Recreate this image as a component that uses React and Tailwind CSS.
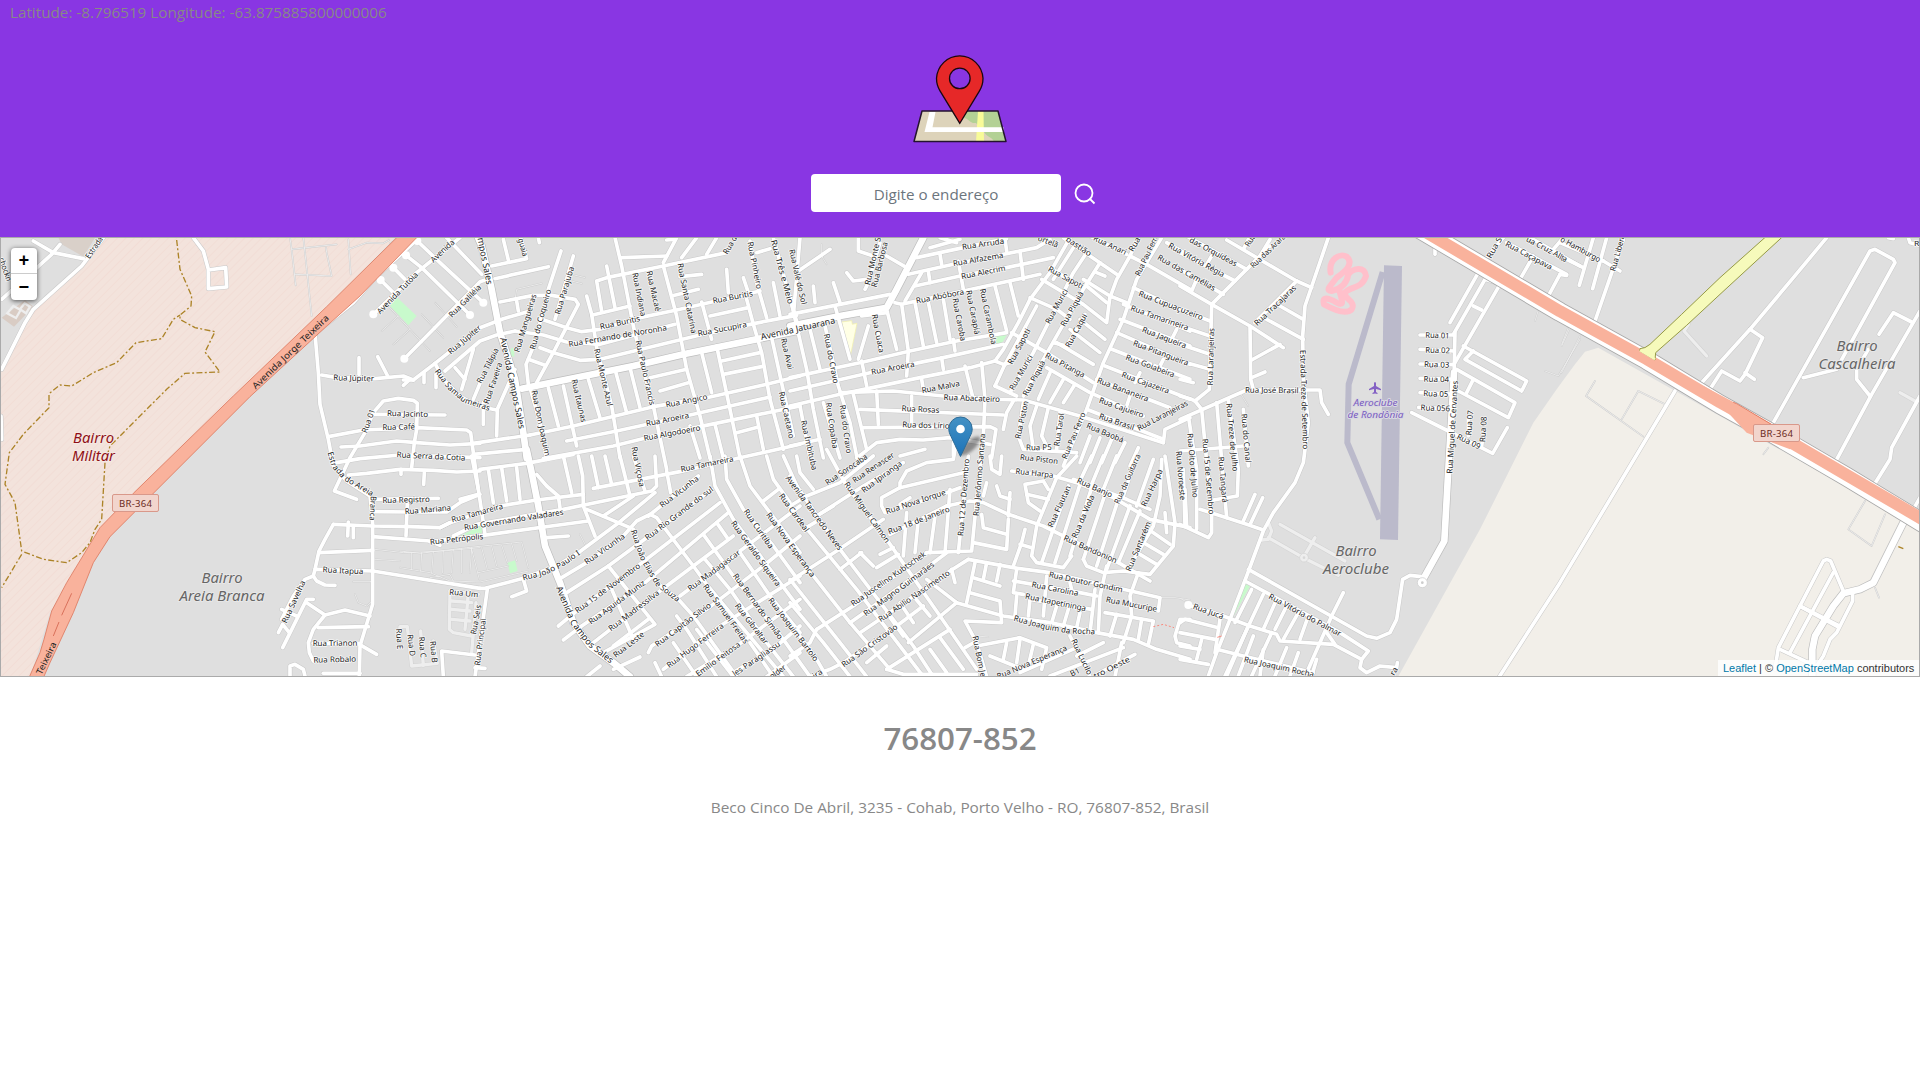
import React from "react";

// Street geometry is grouped by map sheet. Each sheet has its own origin
// (map pixels) and uses third-of-a-pixel units.
const SHEETS = [
  {
    o: [0, 236],
    main: [],
    roads: [
      "1250,12 1130,120 1060,200 945,292 955,410 960,505 985,610 1000,690 1040,735 1110,780 1118,860 1118,1105 1080,1230 1078,1320",
      "965,417 1010,425 1125,428 1210,420 1240,432", "1210,448 1228,432", "1077,365 1077,415", "1133,362 1163,420",
      "1070,790 1003,765 1050,665 1095,590 1120,530 1150,495 1195,487 1240,493 1252,502 1250,580 1243,620 1235,695",
      "1120,535 1335,537", "985,602 1090,582 1250,575 1400,582 1412,590 1420,650 1435,760",
      "1023,633 1080,630 1190,615 1250,620 1350,627 1440,622", "1010,680 1080,668 1200,657 1440,665",
      "1045,717 1100,712 1200,700 1300,703 1370,708 1440,705", "1203,700 1203,715", "1273,710 1271,745",
      "1120,790 1315,787", "1118,827 1230,828 1340,828 1380,800 1440,775", "1222,800 1218,900",
      "1000,865 1118,870 1230,872 1320,875 1350,860", "1045,858 1043,900", "1060,870 1060,905",
      "1000,865 975,910 957,945 945,1000 940,1020 950,1035 975,1047 1005,1048", "957,950 1118,943",
      "1118,902 1290,915 1320,928", "945,1000 1118,1005 1440,1057", "940,1020 915,1030 880,1080 845,1150",
      "845,1120 890,1140", "940,1090 920,1090 848,1235", "848,1165 835,1190", "848,1165 868,1190", "920,1100 975,1137",
      "1110,1140 1035,1122 975,1137 940,1180 925,1220 928,1250 940,1275", "955,1175 1105,1172", "940,1222 1075,1222",
      "1078,1225 1130,1255", "870,1320 870,1290 885,1285 910,1300 915,1320", "970,1312 1080,1312",
      "1120,235 1250,110 1380,5", "1142,132 1180,170", "1180,95 1215,130", "1218,58 1265,95 1410,237",
      "1252,15 1320,80 1450,200", "1213,368 1440,137 1462,130", "1340,5 1445,115",
      "100,15 160,50 250,68", "180,25 155,55 5,190", "310,5 245,90 100,220 75,260 5,400",
      "580,5 610,45 625,100 625,158 680,153 677,95 625,102", "3,540 5,610",
    ],
    thin: [
      "870,5 875,40 887,148", "875,40 1010,25", "910,5 915,50 935,240", "885,115 995,120 980,50 978,35", "1045,10 1052,115",
      "1045,40 1100,20 1150,22 1168,12", "1170,22 1210,5",
      "1145,285 1195,240", "1165,210 1290,345", "1180,325 1230,280", "1265,235 1330,305", "1305,200 1370,272",
      "1125,940 1210,950 1330,945 1440,935", "1125,970 1200,975", "1060,1037 1112,1037", "1065,1075 1075,1100 1100,1110 1112,1100",
    ],
    light: ["1197,1215 1200,1172 1222,1172 1235,1290 1312,1282 1300,1215", "1262,1185 1270,1288"],
    dots: ["1120,235", "1213,368", "1410,237", "1142,132", "1180,95", "1218,58", "1252,15", "1450,200"],
    labels: [
      [1000, 425, 1122, 428, "Rua Júpiter"], [1161, 532, 1284, 535, "Rua Jacinto"], [1147, 574, 1245, 572, "Rua Café"],
      [1093, 590, 1118, 520, "Rua 01"], [1190, 656, 1396, 666, "Rua Serra da Cotia"], [1147, 793, 1289, 790, "Rua Registro"],
      [968, 1001, 1090, 1007, "Rua Itapua"], [852, 1160, 910, 1035, "Rua Savelha"], [938, 1222, 1072, 1221, "Rua Trianon"],
      [940, 1272, 1068, 1269, "Rua Robalo"], [1196, 1178, 1200, 1240, "Rua E"], [1230, 1195, 1238, 1260, "Rua D"],
      [1264, 1202, 1270, 1265, "Rua C"], [1298, 1215, 1304, 1280, "Rua B"], [1135, 230, 1250, 112, "Avenida Tutóia"],
      [1295, 75, 1360, 15, "Avenida"], [262, 65, 303, 5, "Estrada"], [3, 65, 28, 135, "chockn"],
      [762, 455, 983, 242, "Avenida Jorge Teixeira", 27], [117, 1314, 163, 1220, "Teixeira", 27],
    ],
    curves: [["990,648 1003,690 1035,725 1125,778", "Estrada do Areia", 188], ["1120,780 1116,870", "Branca", 74]],
  },
  {
    o: [400, 236],
    main: ["230,-5 245,30 275,160 300,290 345,430 370,590 380,666", "365,458 700,390 850,355 1190,285"],
    roads: [
      "285,128 445,92", "275,90 380,68", "310,10 325,72", "362,5 378,60", "415,5 418,20",
      "10,432 40,432 105,382 240,275 310,248 380,228", "135,405 240,315 290,297 345,285", "165,395 195,430", "220,340 185,460",
      "105,382 130,430 180,480 230,510 290,522", "72,410 72,440", "108,415 108,455", "220,490 245,430", "250,500 250,565",
      "290,600 292,520 345,400", "300,198 400,178 455,178 525,190 535,205 465,340 410,440", "350,195 355,225",
      "483,45 445,160 405,320 378,385 385,445", "520,60 465,250", "425,250 500,275 545,287 600,280 720,245 830,222 1080,165",
      "345,285 430,297 500,318 600,325 825,265", "420,335 460,350 540,373 600,370 730,338 900,297 1065,262 1190,238", "385,370 435,388",
      "560,180 575,235 590,335 635,510 645,570 660,666", "605,225 590,135 620,125 790,90 980,50", "620,90 645,215", "575,238 690,210",
      "645,5 665,90 700,270 730,400 760,510 800,700", "665,65 800,60", "790,90 830,240 860,400 900,540 930,666", "790,80 830,5",
      "845,65 890,5", "920,55 950,5", "800,12 820,10", "840,122 905,115", "815,180 895,160", "980,100 985,170", "1030,125 1045,170",
      "1120,140 1140,240", "905,198 935,310", "930,240 1045,215", "1050,15 1070,140 1100,245", "1040,190 1060,265 1085,350 1110,490 1150,640",
      "1070,50 1110,38", "1120,5 1160,150 1185,240 1200,285", "905,350 935,470", "950,330 990,520 1020,666", "965,375 1080,350",
      "970,415 1085,392", "750,425 860,400", "780,465 865,440", "1115,305 1180,600", "390,597 520,570 760,512 920,485 1100,445 1200,420",
      "500,615 650,585 870,537 1110,483", "430,668 640,630 740,605 900,572 1200,510", "445,455 475,570", "490,450 530,630",
      "565,430 600,545", "645,400 680,530", "690,395 720,515", "220,622 390,597", "220,655 380,640", "945,565 970,666",
      "1070,540 1090,640", "1010,590 1075,573", "870,570 900,666", "390,455 420,560 440,670", "1180,240 1200,5",
    ],
    thin: ["345,190 350,160 425,142", "515,115 555,125", "495,130 545,143"],
    labels: [
      [240, 5, 268, 145, "mpos Sales", 27], [308, 305, 365, 578, "Avenida Campos Sales", 27], [362, 8, 376, 60, "guaia"],
      [150, 240, 240, 150, "Rua Galiléia"], [147, 350, 240, 272, "Rua Júpiter"], [350, 348, 402, 175, "Rua Mangueiras"],
      [397, 340, 446, 160, "Rua do Coqueiro"], [472, 235, 515, 92, "Rua Parajuba"], [237, 440, 290, 338, "Rua Tilápia"],
      [258, 503, 300, 380, "Rua Faveira"], [600, 273, 720, 247, "Rua Buritis"], [506, 325, 800, 275, "Rua Fernando de Noronha"],
      [893, 293, 1040, 265, "Rua Sucupira"], [938, 195, 1058, 172, "Rua Buritis"], [705, 110, 730, 240, "Rua Indiana"],
      [747, 105, 774, 225, "Rua Macaé"], [840, 82, 882, 292, "Rua Santa Catarina"], [1050, 17, 1078, 158, "Rua Pinheiro"],
      [1120, 12, 1172, 203, "Rua Três e Meio", 25], [590, 338, 630, 510, "Rua Monte Azul"], [714, 313, 757, 507, "Rua Paulo Francis"],
      [522, 430, 552, 558, "Rua Itaunas"], [402, 463, 443, 660, "Rua Dom Joaquim"], [797, 507, 922, 482, "Rua Angico"],
      [738, 563, 867, 538, "Rua Aroeira"], [731, 607, 901, 575, "Rua Algodoeiro"], [1150, 307, 1172, 400, "Rua Avai"],
      [1144, 467, 1175, 607, "Rua Caetano"], [975, 52, 1012, -8, "Rua da"], [1083, 304, 1305, 254, "Avenida Jatuarana", 27],
    ],
    curves: [["110,402 150,455 195,493 290,524", "Rua Samaumeiras", 203]],
  },
  {
    o: [400, 456],
    main: ["380,-20 395,50 415,150 435,270 480,380 520,500 570,570 640,620 690,662"],
    roads: [
      "240,40 380,22 520,-5", "215,0 235,100 250,200 255,235", "265,40 280,140", "305,35 320,135", "350,35 360,130", "180,130 235,115",
      "120,215 150,200 300,150 410,132 550,115", "160,240 230,205 490,160 755,105 770,90 765,0", "90,257 250,238 565,195",
      "410,55 440,90 475,120 480,155", "490,0 515,110", "535,0 548,60 550,150 585,240", "575,0 595,95", "615,0 635,85", "660,0 690,120",
      "580,97 840,47 1020,5 1200,-35", "560,160 690,215", "700,0 735,105", "800,45 812,110", "440,245 505,240",
      "240,397 255,397 370,367 470,330 535,290 650,205 765,110", "610,180 700,120", "485,365 560,320 670,240 710,195 750,175 770,185 880,330 920,385 990,470 1150,662",
      "500,410 625,330 740,245 935,100", "745,180 895,60", "262,400 225,662", "370,370 380,405 335,422", "130,662 125,585 225,597",
      "225,635 255,637", "475,510 530,465 720,325 960,140", "490,552 545,510 735,380 985,170", "580,560 780,405 1000,240",
      "840,420 1020,285 1200,150", "625,330 765,505 610,590", "745,490 640,570 ", "635,400 700,550", "560,662 600,630", "640,640 720,603",
      "700,220 730,300 770,380 835,430 880,480 1010,662", "930,0 945,90 1000,190 1140,380 1200,460", "975,0 980,70 1030,160 1120,270 1200,380",
      "1020,0 1050,90 1110,170 1200,290", "1100,0 1120,70 1170,140", "1150,0 1200,110", "1090,135 1135,100", "950,200 985,250",
      "910,235 1000,360 1150,550 1230,662", "915,310 990,400 1100,560 1180,662", "1020,290 1110,420 1200,530",
      "745,590 755,570 920,460 1090,330 1200,240", "790,640 960,510 1200,360", "860,662 1010,570 1200,430", "1000,650 1130,570 1200,510",
      "1100,662 1200,590", "830,480 860,520 950,662", "820,560 890,662", "765,620 785,662", "890,520 1000,662", "1050,560 1120,662",
    ],
    thin: [
      "0,285 60,292 200,275 365,258 385,335", "0,335 90,350 150,375 240,378 385,345", "35,290 35,340", "65,290 62,345", "100,288 95,350",
      "130,285 128,350", "160,280 155,350", "185,278 185,350", "215,275 210,350", "90,365 150,355 160,375", "215,280 238,370", "245,275 262,340",
      "275,270 290,330", "305,268 322,320", "335,263 350,315", "235,350 325,330", "540,235 555,265",
    ],
    light: ["150,405 148,520 160,530 215,540", "205,410 200,470 195,520", "155,435 215,440", "155,460 210,465", "155,490 210,495", "228,440 215,590", "150,405 235,415"],
    labels: [
      [14, 167, 153, 155, "Rua Mariana"], [155, 192, 308, 150, "Rua Tamareira"], [192, 215, 490, 168, "Rua Governando Valadares"],
      [90, 258, 250, 241, "Rua Petrópolis"], [148, 408, 235, 416, "Rua Um"], [220, 535, 236, 447, "Rua Seis"],
      [232, 628, 250, 487, "Rua Principal"], [556, 320, 672, 238, "Rua Vicunha"], [782, 150, 893, 65, "Rua Vicunha"],
      [842, 40, 1000, 8, "Rua Tamareira"], [738, 247, 937, 97, "Rua Rio Grande do sul"], [528, 466, 718, 327, "Rua 15 de Novembro"],
      [568, 500, 733, 378, "Rua Aguida Muniz"], [628, 520, 775, 408, "Rua Madressilva"], [642, 600, 730, 532, "Rua Leste"],
      [768, 567, 930, 445, "Rua Capitão Silvio"], [803, 630, 968, 507, "Rua Hugo Ferreira"], [890, 656, 1018, 563, "Emilio Feitosa"],
      [1000, 655, 1138, 562, "les Paragliassu"], [1105, 668, 1155, 632, "tolder"], [866, 400, 1018, 287, "Rua Madagascar"],
      [914, 387, 1040, 560, "Rua Samuel Freitas"], [1004, 355, 1143, 547, "Rua Bernardo Simião"], [1010, 445, 1100, 562, "Rua Gibraltar"],
      [1110, 428, 1250, 613, "Rua Joaquim Bartolo"], [998, 197, 1136, 388, "Rua Geraldo Siqueira"], [1036, 162, 1115, 275, "Rua Curitiba"],
      [1104, 172, 1240, 360, "Rua Nova Esperança"], [1142, 115, 1222, 225, "Rua Cardeal"], [1162, 62, 1322, 280, "Avenida Tancredo Neves", 25],
      [702, -28, 726, 92, "Rua Viçosa"],
    ],
    curves: [
      ["475,392 520,500 570,565 660,635", "Avenida Campos Sales", 283, 27],
      ["368,366 430,350 480,328 550,280", "Rua João Paulo I", 188],
      ["700,222 730,310 775,385 860,450", "Rua João Elias de Souza", 258],
    ],
  },
  {
    o: [790, 236],
    main: ["0,270 150,240 290,215 320,160 400,5"],
    roads: [
      "0,235 300,175", "0,425 220,378 360,345 500,315 650,290", "0,465 240,410 460,365 640,325", "0,510 150,475 390,425 540,395 615,375",
      "150,470 310,465 460,480 630,490 700,492 870,540 1120,620", "315,200 335,205 520,165 750,115", "380,65 520,35 650,8", "355,115 490,85 740,35 780,10",
      "375,150 510,120 650,95 790,65", "345,195 395,110", "415,105 420,140", "450,55 455,85", "505,75 520,160", "645,10 650,45", "690,45 700,130",
      "335,205 355,345 350,420", "290,220 320,340", "375,200 400,330", "415,200 440,320", "460,190 480,310", "490,310 495,345", "615,150 650,285",
      "660,140 685,240", "840,5 780,110 720,190 685,260 640,340 615,375", "130,140 150,200", "135,210 180,370", "0,180 20,270 50,400 70,520 100,666",
      "70,150 75,200", "60,280 90,400", "105,270 145,450 180,560 200,660", "205,370 235,270", "215,240 290,230", "265,290 270,350", "25,105 120,40", "170,110 190,135 230,130",
      "205,5 205,45 250,60", "225,160 235,140 270,20", "290,60 350,95", "215,375 230,450", "455,365 460,400", "395,430 400,460", "525,390 550,490",
      "575,380 585,490 580,600", "190,475 230,640", "260,465 265,565", "365,480 365,560", "210,520 640,537", "220,575 600,572 618,580 605,666",
      "0,630 90,610", "30,510 60,666", "100,500 150,666", "200,666 260,620 330,610 400,612 480,605 540,615", "330,660 405,640", "490,620 490,660", "540,615 600,625",
      "665,290 770,350 910,440", "615,375 640,385 660,380", "615,450 680,480", "615,450 640,395 740,210", "660,470 730,350 800,210 850,110 890,50",
      "700,480 760,370 840,230 880,160 930,80", "790,320 830,330 885,235", "850,35 790,130", "720,185 800,220 840,250", "755,130 880,205 950,260 960,180",
      "780,95 875,155", "820,5 900,60 980,115", "880,130 960,180 1010,200", "920,110 945,120", "890,150 950,200", "870,250 945,310", "840,280 930,350",
      "800,320 910,385", "1115,5 1070,80 1040,130 1000,250 940,380 890,520 840,640 820,690", "1045,5 1020,60 980,130 960,185",
      "1030,155 1200,235", "1000,205 1200,285", "990,250 1200,330", "980,290 1200,385", "965,340 1200,430", "945,390 1200,490", "920,430 1140,515",
      "770,395 900,470 1060,540", "890,520 1120,610", "1130,20 1200,60", "1070,85 1200,160", "1020,60 1070,85", "900,0 1010,55", "760,5 800,30",
      "640,580 650,530 670,495", "700,500 685,600 700,640 860,650", "740,510 720,570 730,640", "775,515 755,600 775,640", "810,530 800,640",
      "745,490 780,410", "780,500 820,430", "820,500 855,445", "1120,620 1125,580 1200,545", "900,600 870,680", "930,605 900,680", "965,610 935,680", "1005,620 975,680", "1045,635 1020,690",
      "1160,280 1140,320", "1120,370 1105,400", "1050,410 1035,440", "1020,480 1010,510", "420,35 510,10", "450,5 500,20",
    ],
    thin: ["95,25 95,60 110,85"],
    labels: [
      [5, 40, 42, 205, "Rua Valé do Sol"], [232, 147, 268, -10, "Rua Monte Se"], [252, 153, 286, 18, "Rua Barbosa"],
      [516, 33, 642, 15, "Rua Arruda"], [489, 83, 640, 57, "Rua Alfazema"], [514, 122, 646, 96, "Rua Alecrim"],
      [378, 195, 522, 167, "Rua Abóbora"], [495, 187, 520, 315, "Rua Caroba"], [536, 163, 562, 295, "Rua Carapiá"],
      [577, 158, 612, 325, "Rua Carambola"], [253, 235, 275, 350, "Rua Cuaca"], [109, 293, 138, 442, "Rua do Cravo"],
      [244, 408, 373, 384, "Rua Aroeira"], [395, 464, 509, 442, "Rua Malva"], [461, 484, 630, 490, "Rua Abacateiro"],
      [335, 517, 448, 523, "Rua Rosas"], [337, 566, 490, 570, "Rua dos Lírios"], [115, 500, 136, 637, "Rua Copaíba"],
      [157, 507, 177, 652, "Rua do Cravo"], [40, 553, 74, 702, "Rua Imbituba"], [776, 97, 878, 152, "Rua Sapoti"],
      [772, 262, 828, 160, "Rua Murici"], [818, 270, 875, 168, "Rua Piquiá"], [832, 333, 885, 235, "Rua Caqui"],
      [660, 383, 715, 280, "Rua Sapoti"], [664, 460, 722, 358, "Rua Murici"], [705, 478, 760, 375, "Rua Piquiá"],
      [767, 357, 883, 418, "Rua Pitanga"], [683, 608, 708, 495, "Rua Piston"], [800, 630, 815, 532, "Rua Tarol"],
      [823, 668, 880, 530, "Rua Pau Ferro"], [708, 635, 785, 634, "Rua P5"], [890, 568, 1000, 613, "Rua Baobá"],
      [928, 540, 1032, 575, "Rua Brasil"], [928, 492, 1060, 538, "Rua Cajueiro"], [922, 432, 1075, 490, "Rua Bananeira"],
      [996, 415, 1137, 466, "Rua Cajazeira"], [1008, 363, 1153, 417, "Rua Goiabeira"], [1030, 320, 1195, 382, "Rua Pitangueira"],
      [1057, 280, 1188, 330, "Rua Jaqueira"], [1023, 215, 1195, 276, "Rua Tamarineira"], [1047, 172, 1238, 245, "Rua Cupuaçuzeiro"],
      [1043, 578, 1192, 500, "Rua Laranjeiras"], [1042, 118, 1100, -5, "Rua Pau Ferro"], [1022, 45, 1045, 5, "Rua"],
      [912, 5, 1008, 50, "Rua Anari"], [830, 7, 902, 55, "bastião"], [745, 5, 804, 28, "ortelã"], [1104, 62, 1275, 158, "Rua das Camélias"],
      [1137, 27, 1302, 117, "Rua Vitória Régia"],
    ],
  },
  {
    o: [790, 456],
    main: [],
    roads: [
      "580,-60 560,130 545,285 410,290", "535,0 510,240 505,290", "0,60 150,280 370,570 430,662", "110,-20 170,90 290,250 450,480 560,640",
      "0,160 60,230 200,400 400,662", "0,270 70,360 180,500 300,640", "0,370 150,560 230,662", "0,440 100,560 180,662", "0,500 80,610 110,662",
      "20,0 30,50 70,100", "0,375 140,285 280,190", "0,150 50,120 150,80 250,0", "80,180 220,90 340,20", "80,520 190,450 410,290",
      "180,500 230,465 430,320 470,290", "210,530 270,490 480,345 535,310", "0,600 60,560 80,520", "60,662 120,640 160,620 320,510 400,450",
      "355,560 500,440", "290,640 480,520", "150,340 215,290", "260,335 325,295", "270,295 310,275", "210,290 250,330", "80,180 130,150",
      "40,220 90,190", "330,440 370,500", "370,420 420,480", "290,470 340,540", "420,580 470,650", "450,545 520,640", "230,620 290,570",
      "500,440 640,480 780,500 920,530 1030,550 1100,580 1200,610", "500,440 410,370", "485,340 495,380", "535,310 670,335 780,350 1000,400 1110,425 1105,465",
      "555,320 530,440", "590,320 580,370", "630,325 620,375", "550,365 630,390", "540,410 630,435 635,500 525,495 560,560 590,662", "525,575 560,555",
      "550,260 650,280 655,190", "575,175 580,215 650,235", "470,150 540,135 580,140 655,175 760,210 830,245 985,320 1080,375", "660,110 655,180",
      "620,90 630,120 660,130", "590,80 580,120", "600,0 605,40 630,55 635,0", "665,45 790,60 860,80 970,125 1080,190 1200,215", "850,70 1010,130 1080,160",
      "775,100 760,75 705,85 715,140 750,165", "710,115 775,130", "860,0 800,65 740,210 725,300 740,320 820,335 845,300",
      "835,90 755,320", "870,85 795,320", "905,95 840,300", "945,115 880,310", "985,130 920,330", "1020,150 950,340", "1050,165 985,320",
      "905,0 870,75", "940,0 905,85", "980,0 940,100", "1040,0 1000,120", "1090,10 1040,150", "880,310 890,330 940,350 1000,345 1080,355 1150,270 1155,200 1125,0",
      "1115,10 1110,120 1090,210 1020,330", "1075,220 1140,265", "1060,260 1120,295", "1050,295 1100,325", "1125,170 1130,230", "705,220 695,260 670,330", "690,265 725,275",
      "680,340 670,410 700,415", "670,375 870,410 920,420", "720,430 905,460", "770,360 760,480", "840,380 845,400", "680,420 675,480", "720,430 715,480",
      "800,450 785,500", "835,460 820,510", "870,470 860,515", "915,400 900,530", "950,330 930,420 925,530", "945,470 1090,495 1075,565", "980,475 960,540",
      "1045,350 1020,420 1025,480 1000,560", "1055,490 1045,550", "995,560 975,662", "560,570 690,545 770,575 755,640", "600,600 700,640", "650,560 640,610",
      "690,550 680,620", "730,565 715,630", "840,540 870,600 900,662", "690,650 860,575", "860,600 940,560", "780,660 1000,575", "930,650 1035,595",
      "520,50 330,95 330,80 350,45 410,20 490,10 495,-20", "330,95 275,125 275,150 285,170", "290,170 470,110 510,95", "300,235 470,150", "385,190 375,290",
      "350,170 340,300", "435,180 420,290", "480,100 465,290", "360,125 330,145", "1185,100 1190,210", "1200,490 1170,490 1155,540 1160,560 1200,570", "290,640 340,655 560,655",
    ],
    thin: ["1115,425 1155,425 1200,432", "560,540 595,543"],
    labels: [
      [108, 82, 230, 0, "Rua Sorocaba"], [190, 75, 310, -5, "Rua Renascer"], [217, 105, 333, 20, "Rua Ipiranga"],
      [168, 80, 294, 258, "Rua Miguel Calmon"], [288, 167, 466, 108, "Rua Nova Iorque"], [295, 228, 478, 158, "Rua 18 de Janeiro"],
      [512, 240, 530, 8, "Rua 12 de Dezembro"], [558, 180, 578, -67, "Rua Jerônimo Santana"], [185, 445, 405, 292, "Rua Juscelino Kubtschek"],
      [223, 475, 430, 323, "Rua Magno Guimarães"], [268, 492, 477, 348, "Rua Abilio Nascimento"], [157, 628, 320, 510, "Rua São Cristovão"],
      [677, 45, 790, 58, "Rua Harpa"], [690, 3, 804, 16, "Rua Piston"], [862, 72, 966, 118, "Rua Banjo"],
      [780, 213, 836, 90, "Rua Flautan"], [852, 245, 907, 118, "Rua da Viola"], [980, 142, 1045, -5, "Rua da Guitarra"],
      [1060, 150, 1112, 40, "Rua Harpa"], [1014, 345, 1076, 198, "Rua Santarém"], [822, 245, 980, 315, "Rua Bandonion"],
      [777, 355, 998, 402, "Rua Doutor Gondim"], [725, 385, 865, 412, "Rua Carolina"], [706, 420, 888, 458, "Rua Itapetininga"],
      [948, 430, 1101, 460, "Rua Mucuripe"], [850, 550, 900, 655, "Rua Lucilo"], [555, 540, 580, 662, "Rua Bom Je"],
      [622, 662, 830, 575, "Rua Nova Esperança"], [912, 662, 1018, 608, "tro Oeste"], [842, 655, 868, 642, "B1"],
      [1166, -15, 1178, 132, "Rua Noroeste"], [70, 662, 95, 645, "ira"],
    ],
    curves: [["672,486 770,513 840,525 940,528", "Rua Joaquim da Rocha", 248]],
  },
  {
    o: [1180, 236],
    main: ["822,410 805,700 793,915 732,1025"],
    roads: [
      "445,5 375,210 368,300 370,430 385,560 370,680 345,740 280,830 250,885 200,1020 150,1150 110,1250 85,1320",
      "0,150 95,205 210,270 310,335", "300,325 215,372", "210,270 212,430 220,460", "215,425 255,408", "95,205 130,170 270,30", "95,205 88,460 45,495 65,520",
      "0,550 200,462 420,462 425,500 445,535", "0,480 30,488 45,495", "0,430 40,440", "0,220 90,255", "0,270 90,300", "0,325 90,355", "0,375 90,400",
      "20,0 200,100", "0,50 165,135", "0,100 130,175", "140,12 350,135 395,155", "270,10 240,60", "205,10 190,40", "95,60 80,85", "50,130 35,165",
      "350,135 225,260", "300,210 370,250", "260,250 370,310", "25,540 50,700 50,880", "65,520 95,830 95,890 85,905 0,865", "110,500 140,845",
      "145,490 175,700 172,780 100,792", "190,520 205,690", "0,645 190,630", "10,700 15,870", "60,820 140,845 200,865 250,882", "225,775 190,855",
      "248,785 212,862", "205,1000 560,1200 590,1207 630,1190 650,1150 668,1030 690,1018 725,1022", "195,1035 480,1190 565,1245 545,1270 540,1295 560,1310 600,1290 650,1295 652,1280",
      "490,1070 455,1140 380,1310", "825,290 822,430", "820,295 915,130 950,140", "825,380 960,145", "895,110 810,260", "880,210 905,222", "720,297 822,297", "720,340 822,345",
      "720,384 822,386", "720,427 822,430", "720,470 810,474", "716,514 800,518", "695,530 805,585 938,652 982,575", "850,330 1040,435 1025,465 855,370 880,345",
      "830,400 1005,500 985,545 835,465", "880,430 860,470", "865,540 865,600", "910,590 905,630", "920,65 970,5", "1020,130 1060,60", "980,20 1160,115", "1140,115 1105,180", "1050,5 1200,90",
      "1120,40 1150,5", "765,5 765,55", "25,1107 130,1140 210,1170 290,1195 300,1215 460,1225 545,1270", "215,1060 165,1160", "250,1075 135,1320", "290,1090 250,1180", "205,1170 140,1320",
      "320,1110 285,1180", "355,1130 310,1210", "385,1140 360,1210", "220,1200 175,1320", "275,1190 215,1320", "320,1235 285,1320", "355,1250 330,1320", "410,1270 395,1320", "250,1240 240,1320",
      "110,1240 190,1260 400,1310", "0,1160 15,1150 115,1175", "0,1190 105,1210", "0,1230 60,1240", "0,1270 85,1285", "65,1210 50,1270", "120,1150 105,1250", "440,1190 465,1225",
    ],
    thin: ["1165,275 1145,325", "1200,310 1135,420 1095,405", "180,470 205,510", "1085,190 1065,255", "5,1090 25,1100"],
    light: ["300,865 495,975", "265,905 370,965 475,1018", "370,965 405,905", "265,860 275,885 265,910 245,912"],
    dots: ["25,1107", "727,1040"],
    labels: [
      [215, 92, 320, -8, "Rua das Araras"], [30, 10, 170, 85, "das Orquídeas"], [200, 30, 222, -5, "Rua"],
      [226, 265, 345, 152, "Rua Tracajaras"], [90, 448, 95, 276, "Rua Laranjeiras"], [195, 462, 356, 464, "Rua José Brasil"],
      [368, 342, 377, 640, "Estrada Treze de Setembro"], [147, 502, 166, 706, "Rua Treze de Julho"], [192, 533, 205, 680, "Rua do Canal"],
      [30, 592, 46, 785, "Rua Oito de Julho"], [75, 608, 95, 835, "Rua 15 de Setembro"], [123, 662, 135, 800, "Rua Tangará"],
      [736, 297, 808, 300, "Rua 01"], [736, 342, 810, 344, "Rua 02"], [732, 385, 808, 387, "Rua 03"], [731, 429, 807, 431, "Rua 04"],
      [730, 472, 805, 475, "Rua 05"], [722, 515, 810, 518, "Rua 056"], [866, 598, 872, 523, "Rua 07"], [908, 618, 912, 542, "Rua 08"],
      [832, 600, 900, 633, "Rua 09"], [809, 713, 826, 434, "Rua Miguel de Cervantes"], [268, 1080, 482, 1195, "Rua Vitória do Palmar"],
      [40, 1110, 130, 1142, "Rua Jucá"], [192, 1270, 402, 1316, "Rua Joaquim Rocha"], [978, 22, 1115, 95, "Rua Caçapava"],
      [1040, 8, 1160, 70, "ua Cruz Alta"], [926, 65, 960, 5, "Rua S"], [635, 1316, 648, 1295, "ra"],
    ],
  },
  {
    o: [1560, 236],
    main: ["1030,860 940,1040 900,1060 850,1072 820,1110 765,1200 757,1240 757,1320"],
    roads: [
      "800,5 700,125 570,280 425,440", "570,280 608,305 555,415 540,435 485,405 450,460", "555,410 583,430",
      "640,560 930,45 945,40 1000,70 1005,80 840,380 830,400 730,425", "1080,225 935,475 825,680", "1055,258 1000,230 957,295", "925,340 890,400 890,430 930,480",
      "1080,480 995,635 990,670 940,750", "1080,785 1060,820", "105,255 190,10", "0,60 70,95", "58,148 100,5", "98,158 140,5", "130,75 180,105",
      "0,20 130,75", "0,115 20,118", "345,465 0,1040 -200,1350", "645,1300 655,1235 790,975 800,970 812,975 850,1065", "820,1010 690,1250",
      "878,1075 878,1095 830,1190 810,1210 790,1260 770,1290", "720,1110 835,1168", "722,1112 833,1172", "660,1240 745,1280", "985,5 1000,8", "1045,5 1050,20 1080,28",
    ],
    thin: [
      "105,435 78,480 250,602", "235,465 185,550", "235,465 315,505", "915,795 865,880 935,930 975,835", "945,1055 957,1085", "625,635 610,655",
      "30,275 5,330", "60,300 5,410",
    ],
    light: ["1020,470 1065,495", "385,265 372,285 440,360"],
    labels: [[3, 8, 120, 72, "o Hamburgo"], [0, 62, 20, 72, "lta"], [158, 105, 188, -5, "Rua Libero"], [1062, 22, 1078, 22, "R"]],
  },
];

const at = (o) => `translate(${o[0]} ${o[1]}) scale(0.33333)`;

function Lines({ list, width, color }) {
  return (
    <g fill="none" stroke={color} strokeWidth={width} strokeLinecap="round" strokeLinejoin="round">
      {(list || []).map((p, i) => <polyline key={i} points={p} />)}
    </g>
  );
}

function StreetName({ item }) {
  const [x1, y1, x2, y2, text, size = 24] = item;
  const length = Math.hypot(x2 - x1, y2 - y1);
  const angle = (Math.atan2(y2 - y1, x2 - x1) * 180) / Math.PI;
  return (
    <text transform={`translate(${x1} ${y1}) rotate(${angle})`} dy="8" fontSize={size} textLength={length} lengthAdjust="spacingAndGlyphs">
      {text}
    </text>
  );
}

function CurvedName({ item, id }) {
  const [points, text, length, size = 24] = item;
  return (
    <>
      <path id={id} d={"M" + points.split(" ").join(" L")} fill="none" stroke="none" />
      <text fontSize={size} dy="8">
        <textPath href={"#" + id} textLength={length} lengthAdjust="spacingAndGlyphs">{text}</textPath>
      </text>
    </>
  );
}

function Shield({ x, y }) {
  return (
    <g>
      <rect x={x} y={y} width="46" height="17" rx="1.5" fill="#f2d5cd" stroke="#d9988a" strokeWidth="1" />
      <text x={x + 23} y={y + 12} textAnchor="middle" fontSize="9.6" fill="#6b2a1c" textLength="33">BR-364</text>
    </g>
  );
}

function District({ x, y, lines, color = "#666666", size = 15.2, gap = 18, halo = "#e8e8e8" }) {
  return (
    <g fontSize={size} fontStyle="italic" fill={color} stroke={halo} strokeWidth="2" paintOrder="stroke" strokeLinejoin="round" textAnchor="middle">
      {lines.map(([t, w], i) => <text key={t} x={x} y={y + i * gap} textLength={w} lengthAdjust="spacingAndGlyphs">{t}</text>)}
    </g>
  );
}

function StreetMap() {
  const [west, north] = SHEETS;
  const aero = SHEETS[5].o;
  const east = SHEETS[6].o;
  return (
    <svg viewBox="1 238 1918 438" className="block h-full w-full" fontFamily="'Noto Sans', 'Open Sans', sans-serif" role="img" aria-label="Mapa de Porto Velho">
      <defs>
        <pattern id="hatch" width="6" height="6" patternUnits="userSpaceOnUse" patternTransform="scale(3) rotate(45)">
          <line x1="0" y1="0" x2="0" y2="6" stroke="#f1d6ce" strokeWidth="0.8" />
        </pattern>
        <linearGradient id="pin" x1="0" y1="0" x2="0" y2="1">
          <stop offset="0" stopColor="#4391c4" />
          <stop offset="1" stopColor="#1d73b8" />
        </linearGradient>
        <filter id="soft" x="-30%" y="-30%" width="160%" height="160%"><feGaussianBlur stdDeviation="1.6" /></filter>
      </defs>
      <rect x="0" y="236" width="1920" height="442" fill="#dfdfdf" />

      <g transform={at(west.o)}>
        {["#f3e3dc", "url(#hatch)"].map((f) => (
          <polygon key={f} fill={f} points="310,0 245,90 100,222 75,260 0,405 0,1326 90,1326 150,1130 290,890 400,775 980,215 1190,0" />
        ))}
        <polygon points="175,5 285,5 250,62 185,25" fill="#d9d0c9" />
        <polygon points="5,245 42,272 100,212 75,192" fill="#d9ccc4" />
        <g fill="none" stroke="#eee" strokeWidth="7"><path d="M22 232l18-22 22 12-14 24zM60 220l14-18 16 10-12 20z" /></g>
        <polygon points="1190,183 1250,240 1225,268 1170,210" fill="#c8facc" />
        <polygon points="1380,900 1445,868 1445,897" fill="#c8facc" />
      </g>
      <g transform={at(north.o)}><polygon points="333,335 343,338 343,362 331,360" fill="#c8facc" /></g>
      <g transform={at([400, 456])} fill="#c8facc">
        <polygon points="322,320 345,313 353,345 330,352" />
        <polygon points="180,240 245,208 245,237" />
      </g>
      <g transform={at([790, 236])}>
        <polygon points="155,258 185,254 187,265 201,262 179,370" fill="#ffffe5" stroke="#f5f3a8" strokeWidth="2" />
        <polygon points="616,293 656,287 636,322 620,323" fill="#c8facc" />
      </g>
      <g transform={at(aero)}>
        <polygon points="612,88 666,90 654,912 600,910" fill="#bbbacb" />
        <polyline points="608,108 506,445 502,620 598,850" fill="none" stroke="#bbbacb" strokeWidth="18" />
        <polygon points="195,1043 210,1050 150,1160" fill="#c8facc" />
        <path d="M452 110C445 70 480 50 500 62C525 85 490 110 470 125C450 150 435 165 455 165C480 160 500 145 505 115C520 95 555 90 558 120C545 160 510 150 495 170C490 190 530 195 515 220C495 240 450 215 432 205C425 180 445 185 470 200C500 215 480 180 478 160" fill="none" stroke="#ffc0cb" strokeWidth="18" strokeLinecap="round" />
      </g>
      <g transform={at(east)}>
        <polygon points="115,335 75,347 45,385 -10,460 -80,560 -240,880 -490,1330 1085,1330 1085,880" fill="#f2efe9" />
      </g>

      {SHEETS.map((s, i) => (
        <g key={i} transform={at(s.o)}>
          <Lines list={s.thin} width={5} color="#cbcbcb" />
          <Lines list={s.light} width={13} color="#d2d2d2" />
          <Lines list={s.roads} width={14} color="#c9c9c9" />
          <Lines list={s.main} width={24} color="#bdbdbd" />
        </g>
      ))}
      {SHEETS.map((s, i) => (
        <g key={i} transform={at(s.o)}>
          <Lines list={s.thin} width={2.5} color="#f0f0f0" />
          <Lines list={s.light} width={10} color="#eeeeee" />
          <Lines list={s.roads} width={11} color="#ffffff" />
          <Lines list={s.main} width={20} color="#ffffff" />
          {(s.dots || []).map((d) => {
            const [cx, cy] = d.split(",");
            return <circle key={d} cx={cx} cy={cy} r="12" fill="#fff" />;
          })}
        </g>
      ))}

      <g transform={at(aero)}>
        <circle cx="372" cy="965" r="13" fill="#eee" stroke="#d2d2d2" strokeWidth="2" />
        <circle cx="372" cy="965" r="4" fill="#d8d8d8" />
        <circle cx="727" cy="1040" r="15" fill="#fff" stroke="#c9c9c9" strokeWidth="2" />
        <circle cx="727" cy="1040" r="4" fill="#ccc" />
        <polyline points="112,1204 125,1200" stroke="#f98b80" strokeWidth="3" />
      </g>
      <g transform={at([790, 456])}>
        <polyline points="1090,512 1120,505 1152,515" fill="none" stroke="#f98b80" strokeWidth="3" strokeDasharray="6 6" />
      </g>

      <g transform={at(west.o)}>
        <path d="M1195 0L980 212L700 480L400 772L300 875L200 1040L155 1125L132 1210L120 1250L85 1330L128 1330L150 1280L220 1130L280 980L330 902L450 782L750 482L975 275L1080 180L1250 5Z" fill="#f9b29c" stroke="#dc7a60" strokeWidth="2.5" />
        <path d="M215 1072L185 1138M177 1158L160 1200" stroke="#d9705a" strokeWidth="3" />
        <g fill="none" stroke="#ac8327" strokeWidth="4" strokeDasharray="18 7 6 7" strokeLinejoin="round">
          <polyline points="530,12 540,100 575,180 573,210 540,237 540,250 585,275 645,287 615,348 660,408 555,412 500,460 370,590 330,630 315,680 305,850 285,880 270,920 245,950 200,980 130,970 65,945 45,800 15,745 28,650 70,595 147,515 147,473 180,447 215,450 280,410 350,380 408,320 485,308 520,250 540,237" />
          <polyline points="65,955 5,1055" />
        </g>
      </g>

      <g transform={at(east)} fill="none">
        <g strokeLinejoin="round">
          <polyline points="-420,-20 0,228 260,372 480,505 640,594 860,722 1100,868" stroke="#a8a8a8" strokeWidth="59" />
          <polyline points="-420,-20 0,228 260,372 480,505 640,594 860,722 1100,868" stroke="#ffffff" strokeWidth="54" />
          <polyline points="-420,-22 0,226 260,369 480,499 640,588 860,717 1100,857" stroke="#f9b29c" strokeWidth="36" />
        </g>
        <polygon points="430,450 530,503 634,563 720,620 690,640 560,590" fill="#f9b29c" />
        <polyline points="520,499 530,503 634,565" stroke="#dc6f55" strokeWidth="2.5" />
        <path d="M620 0L480 125L365 235L270 325Q255 338 240 338L240 345L285 372L287 350L380 268L480 175L670 0" fill="#f6fabb" stroke="#969a45" strokeWidth="3" />
        <path d="M240 343L285 370" stroke="#f6fabb" strokeWidth="7" />
        <path d="M1015 932L1030 938" stroke="#ac8327" strokeWidth="4" />
      </g>

      {SHEETS.map((s, i) => (
        <g key={i} transform={at(s.o)} fill="#222222" stroke="#ffffff" strokeOpacity="0.85" strokeWidth="4.5" paintOrder="stroke" strokeLinejoin="round">
          {s.labels.map((item, j) => (
            <g key={j} strokeWidth={item[4].includes("Teixeira") ? 0 : 4.5}><StreetName item={item} /></g>
          ))}
          {(s.curves || []).map((item, j) => <CurvedName key={j} item={item} id={`curve-${i}-${j}`} />)}
        </g>
      ))}

      <District x={93.5} y={442.5} lines={[["Bairro", 41], ["Militar", 43]]} color="#8f0f16" halo="#f6e9e3" />
      <District x={222} y={583.2} lines={[["Bairro", 41], ["Areia Branca", 85]]} />
      <District x={1356} y={556.2} lines={[["Bairro", 41], ["Aeroclube", 66]]} />
      <District x={1857} y={351.2} lines={[["Bairro", 41], ["Cascalheira", 77]]} />
      <District x={1375.5} y={405.5} gap={12} size={9.8} color="#7a5cc0" lines={[["Aeroclube", 44], ["de Rondônia", 56]]} halo="#d9d8e2" />
      <path transform="translate(1369 382)" d="M6 0c-.7 0-1 .8-1 1.5V4L0 7v1.200L5 7v3l-1.500 1.100V12L6 11.400 8.500 12v-.9L7 10V7l5 1.200V7L7 4V1.500C7 .8 6.700 0 6 0z" fill="#8461c4" />
      <Shield x={112.5} y={494.5} />
      <Shield x={1753.5} y={424.5} />

      <ellipse cx="970" cy="446" rx="13" ry="5" transform="rotate(-42 970 446)" fill="#000" opacity="0.38" filter="url(#soft)" />
      <path d="M960.500 456.500L951 436.500C949.500 433.500 948.800 431.500 948.800 428.700A11.700 11.700 0 0 1 972.200 428.700C972.200 431.500 971.500 433.500 970 436.500Z" fill="url(#pin)" stroke="#2e6c97" strokeWidth="1" />
      <circle cx="960.500" cy="429" r="4.300" fill="#fff" />
    </svg>
  );
}

function LogoMark() {
  return (
    <svg width="96" height="92" viewBox="0 0 96 92" className="block" aria-hidden="true">
      <polygon points="10,60 86,60 94,90.500 2,90.500" fill="#ddd3ba" />
      <path d="M52 60H86L94 90.500H82C79 85 76 87 72 81L64 72C58 73 56 67 52 67Z" fill="#b3d195" />
      <path d="M66 60H71.500L72 90.500H64Z" fill="#f8fb98" />
      <path d="M17.500 61H23.500L20.500 76.300H91.500V81H12.500Z" fill="#fff" />
      <polygon points="10,60 86,60 94,90.500 2,90.500" fill="none" stroke="#24132f" strokeWidth="1.500" strokeLinejoin="round" />
      <path transform="translate(0 .8)" fillRule="evenodd" d="M47.800 71.500L28 39C25.500 35 24.500 31 24.500 26.500A23.300 24 0 0 1 71 26.500C71 31 70 35 67.500 39ZM47.800 16.300A10.300 10.300 0 1 0 47.800 36.900A10.300 10.300 0 1 0 47.800 16.300Z" fill="#e62828" stroke="#1a0710" strokeWidth="1.300" />
    </svg>
  );
}

export default function App() {
  return (
    <div className="flex min-h-[1080px] w-full flex-col bg-white font-['Open_Sans','Noto_Sans',sans-serif] text-[#888888]">
      <header className="flex h-[237px] flex-col items-center bg-[#8936e3]">
        <p className="h-[51px] w-full whitespace-nowrap px-[10px] text-[15.250px] leading-[25px]">
          Latitude: -8.796519 Longitude: -63.875885800000006
        </p>
        <LogoMark />
        <form className="mt-[31px] flex h-[38px] items-center pr-[12px]" onSubmit={(e) => e.preventDefault()}>
          <input
            className="h-[38px] w-[250px] rounded-[4px] bg-white pt-[2px] text-center text-[15.200px] text-[#6c757d] outline-none placeholder:text-[#6c757d] placeholder:opacity-100"
            placeholder="Digite o endereço"
          />
          <button type="submit" aria-label="Buscar" className="ml-[12px] mt-[2px] flex size-6 items-center justify-center text-white">
            <svg width="24" height="24" viewBox="0 0 24 24" fill="none" stroke="currentColor" strokeWidth="1.800">
              <circle cx="11" cy="11" r="8.500" />
              <path d="M16.500 16.500L21.500 21.500" />
            </svg>
          </button>
        </form>
      </header>

      <section className="relative h-[440px] w-full overflow-hidden border border-[#aaaaaa]">
        <StreetMap />
        <div className="absolute left-[10px] top-[10px] flex w-[26px] flex-col overflow-hidden rounded-[4px] bg-white font-['Liberation_Mono',monospace] text-[18px] font-bold text-black shadow-[0_1px_5px_rgba(0,0,0,0.65)]">
          <button className="h-[26px] border-b border-[#cccccc] pt-[2px] leading-[23px]">+</button>
          <button className="h-[26px] pt-[2px] leading-[24px]">−</button>
        </div>
        <div className="absolute bottom-0 right-0 h-4 w-[201px] whitespace-nowrap bg-white/80 px-[5px] text-right font-['Liberation_Sans',Arial,sans-serif] text-[11px] leading-4 text-[#333333]">
          <span className="text-[#0078a8]">Leaflet</span> | © <span className="text-[#0078a8]">OpenStreetMap</span> contributors
        </div>
      </section>

      <main className="flex flex-col items-center">
        <h1 className="mt-[37px] text-[31.300px] font-semibold leading-[48px]">76807-852</h1>
        <p className="mt-[33px] text-[15.350px] leading-6">Beco Cinco De Abril, 3235 - Cohab, Porto Velho - RO, 76807-852, Brasil</p>
      </main>
    </div>
  );
}
